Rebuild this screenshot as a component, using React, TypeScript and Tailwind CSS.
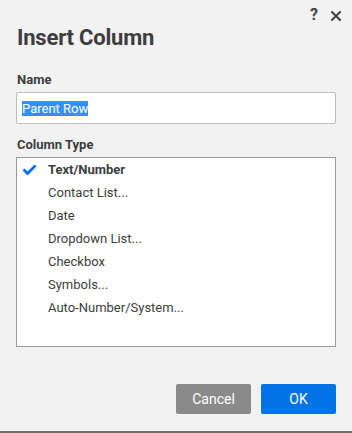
import { useState } from 'react';

const types = [
  'Text/Number',
  'Contact List...',
  'Date',
  'Dropdown List...',
  'Checkbox',
  'Symbols...',
  'Auto-Number/System...',
];

export default function App() {
  const [selected, setSelected] = useState(0);

  return (
    <div className="w-[352px] h-[433px] bg-[#f2f2f2] text-[#3d3d3d] flex flex-col border-b-2 border-[#6f6f6f] font-['Roboto',sans-serif]">
      {/* Header icons */}
      <div className="flex justify-end items-center gap-[13px] pr-[11px] pt-[6px] h-[24px] text-[#444]">
        <span className="text-[16px] font-bold leading-none">?</span>
        <svg width="10" height="10" viewBox="0 0 10 10" className="mt-[2px]">
          <path d="M1 1 L9 9 M9 1 L1 9" stroke="#444" strokeWidth="2" strokeLinecap="square" />
        </svg>
      </div>

      <div className="px-[16px] flex flex-col">
        <h1 className="text-[22px] font-bold leading-none mt-[3px] pl-[1px] tracking-[-0.2px]">Insert Column</h1>

        <label className="text-[13px] font-bold mt-[24px] pl-[1px] leading-none">Name</label>
        <div className="mt-[6px] h-[32px] bg-white border border-[#bdbdbd] rounded-[2px] flex items-center pl-[5px] text-[13px]">
          <span className="bg-[#338fff] text-white leading-[15px] h-[15px]">Parent Row</span>
        </div>

        <label className="text-[13px] font-bold mt-[14px] pl-[1px] leading-none">Column Type</label>
        <div className="mt-[6px] h-[190px] bg-white border border-[#9a9a9a]">
          {types.map((t, i) => (
            <div
              key={t}
              onClick={() => setSelected(i)}
              className={`h-[23px] flex items-center text-[13px] cursor-default ${i === selected ? 'font-bold' : ''}`}
            >
              <span className="w-[31px] flex justify-start pl-[5px]">
                {i === selected && (
                  <svg width="15" height="11" viewBox="0 0 15 11">
                    <path d="M1.5 5.5 L5.5 9.5 L13.5 1.5" stroke="#0073e6" strokeWidth="2.8" fill="none" />
                  </svg>
                )}
              </span>
              <span>{t}</span>
            </div>
          ))}
        </div>
      </div>

      <div className="flex justify-end gap-[10px] pr-[16px] mt-auto mb-[17px]">
        <button className="w-[75px] h-[30px] bg-[#8a8a8a] text-white text-[14px] rounded-[2px]">Cancel</button>
        <button className="w-[75px] h-[30px] bg-[#0073e6] text-white text-[14px] rounded-[2px]">OK</button>
      </div>
    </div>
  );
}
